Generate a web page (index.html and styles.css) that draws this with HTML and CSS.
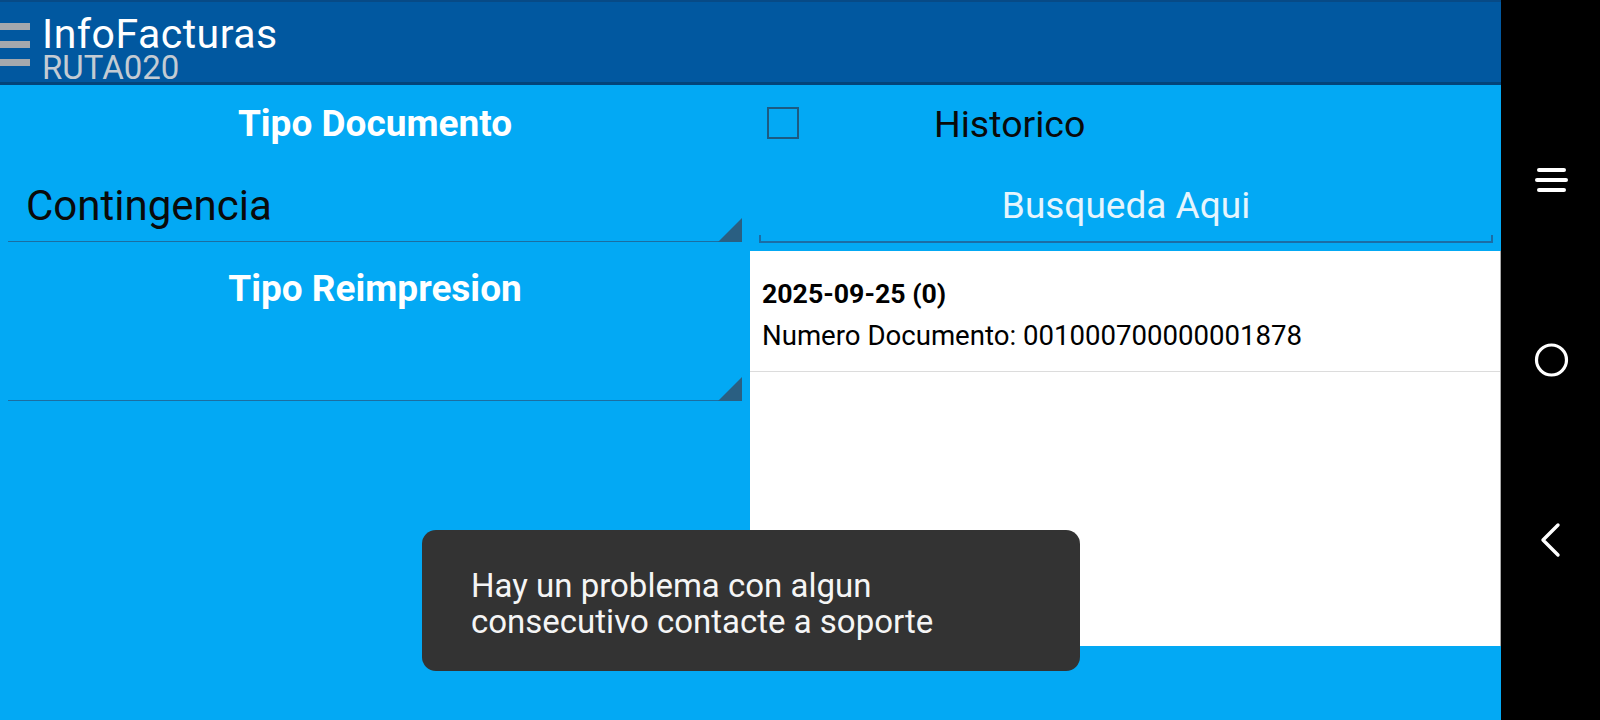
FILE: index.html
```html
<!DOCTYPE html>
<html lang="es">
<head>
<meta charset="utf-8">
<title>InfoFacturas</title>
<link rel="stylesheet" href="styles.css">
</head>
<body>
<div class="screen">
  <div class="app">
    <header class="topbar">
      <div class="menu"><span></span><span></span><span></span></div>
      <div class="titles">
        <div class="title">InfoFacturas</div>
        <div class="subtitle">RUTA020</div>
      </div>
    </header>
    <main class="content">
      <section class="col-left">
        <div class="label label-first">Tipo Documento</div>
        <div class="spinner spinner-first">
          <span class="spinner-text">Contingencia</span>
          <span class="caret"></span>
        </div>
        <div class="label label-second">Tipo Reimpresion</div>
        <div class="spinner spinner-second">
          <span class="spinner-text"></span>
          <span class="caret"></span>
        </div>
      </section>
      <section class="col-right">
        <div class="check-row">
          <span class="checkbox"></span>
          <span class="check-text">Historico</span>
        </div>
        <div class="search">
          <div class="search-text">Busqueda Aqui</div>
          <div class="search-line"></div>
        </div>
        <div class="list">
          <div class="item">
            <div class="item-title">2025-09-25 (0)</div>
            <div class="item-sub">Numero Documento: 001000700000001878</div>
          </div>
        </div>
      </section>
      <div class="toast">Hay un problema con algun<br>consecutivo contacte a soporte</div>
    </main>
  </div>
  <nav class="navbar">
    <div class="nav-slot">
      <svg width="40" height="40" viewBox="0 0 40 40"><g stroke="#fff" stroke-width="4" stroke-linecap="round"><line x1="8" y1="10" x2="33" y2="10"/><line x1="6" y1="20" x2="35" y2="20"/><line x1="8" y1="30" x2="33" y2="30"/></g></svg>
    </div>
    <div class="nav-slot">
      <svg width="40" height="40" viewBox="0 0 40 40"><circle cx="20.5" cy="20" r="15" fill="none" stroke="#fff" stroke-width="3.2"/></svg>
    </div>
    <div class="nav-slot">
      <svg width="40" height="40" viewBox="0 0 40 40"><polyline points="27,5 12,20 27,35" fill="none" stroke="#fff" stroke-width="3.4" stroke-linecap="round" stroke-linejoin="round"/></svg>
    </div>
  </nav>
</div>
</body>
</html>
```

FILE: styles.css
```css
* { box-sizing: border-box; }
html, body { margin: 0; padding: 0; }
body {
  width: 1600px;
  height: 720px;
  overflow: hidden;
  font-family: Roboto, "Noto Sans", Arial, sans-serif;
  background: #000;
}
.screen {
  display: flex;
  width: 1600px;
  height: 720px;
}
.app {
  width: 1501px;
  height: 720px;
  display: flex;
  flex-direction: column;
  background: #03a9f4;
}
.topbar {
  height: 85px;
  flex: none;
  display: flex;
  align-items: flex-start;
  background: #0158a0;
  border-top: 2px solid #074a86;
  border-bottom: 3px solid #03447a;
}
.menu {
  width: 30px;
  margin-top: 21px;
  display: flex;
  flex-direction: column;
  gap: 11px;
}
.menu span {
  display: block;
  height: 7px;
  background: #a4a8ad;
}
.titles {
  margin-left: 12px;
  padding-top: 13px;
}
.title {
  font-size: 41px;
  line-height: 38px;
  color: #ffffff;
  letter-spacing: 0.5px;
}
.subtitle {
  font-size: 33px;
  line-height: 30px;
  color: #c3cbd3;
}
.content {
  position: relative;
  flex: 1;
  display: flex;
}
.col-left {
  width: 750px;
  padding: 0 8px;
  display: flex;
  flex-direction: column;
}
.label {
  text-align: center;
  font-weight: 700;
  font-size: 37px;
  line-height: 48px;
  color: #ffffff;
}
.label-first { margin-top: 15px; }
.label-second { margin-top: 23px; }
.spinner {
  display: flex;
  align-items: flex-end;
  justify-content: space-between;
  border-bottom: 1px solid #1b6ea2;
  padding-left: 18px;
}
.spinner-first { height: 94px; }
.spinner-second { height: 88px; }
.spinner-text {
  font-size: 42px;
  line-height: 50px;
  color: #0a0a0a;
  margin-bottom: 10px;
}
.caret {
  width: 0;
  height: 0;
  border-left: 24px solid transparent;
  border-bottom: 24px solid #2a5f82;
  margin-bottom: -1px;
}
.col-right {
  width: 751px;
  display: flex;
  flex-direction: column;
}
.check-row {
  height: 73px;
  padding-top: 3px;
  display: flex;
  align-items: center;
}
.checkbox {
  width: 32px;
  height: 32px;
  margin-left: 17px;
  border: 2px solid #1c5a82;
}
.check-text {
  margin-left: 135px;
  font-size: 37.5px;
  line-height: 42px;
  color: #0a0a0a;
  position: relative;
  top: 1px;
}
.search {
  margin: 0 8px 0 9px;
  padding-top: 26px;
}
.search-text {
  text-align: center;
  font-size: 37px;
  line-height: 44px;
  color: #e6f5fd;
}
.search-line {
  margin-top: 7px;
  height: 8px;
  border-left: 2px solid #1b6da6;
  border-right: 2px solid #1b6da6;
  border-bottom: 2px solid #1b6da6;
}
.list {
  margin-top: 8px;
  height: 395px;
  background: #ffffff;
  border-right: 1px solid #a9a9a9;
}
.item {
  padding: 22px 10px 14px 12px;
  border-bottom: 1px solid #dcdcdc;
  color: #000;
  line-height: 42px;
}
.item-title { font-weight: 700; font-size: 26.7px; }
.item-sub { font-size: 27.6px; }
.toast {
  position: absolute;
  left: 422px;
  top: 445px;
  width: 658px;
  height: 141px;
  border-radius: 14px;
  background: #333333;
  color: #f5f5f5;
  font-size: 33px;
  line-height: 36px;
  padding: 38px 20px 0 49px;
}
.navbar {
  width: 99px;
  height: 720px;
  background: #000;
  padding: 90px 0;
  display: flex;
  flex-direction: column;
}
.nav-slot {
  height: 180px;
  display: flex;
  align-items: center;
  justify-content: center;
}
.nav-slot svg { display: block; }
```
